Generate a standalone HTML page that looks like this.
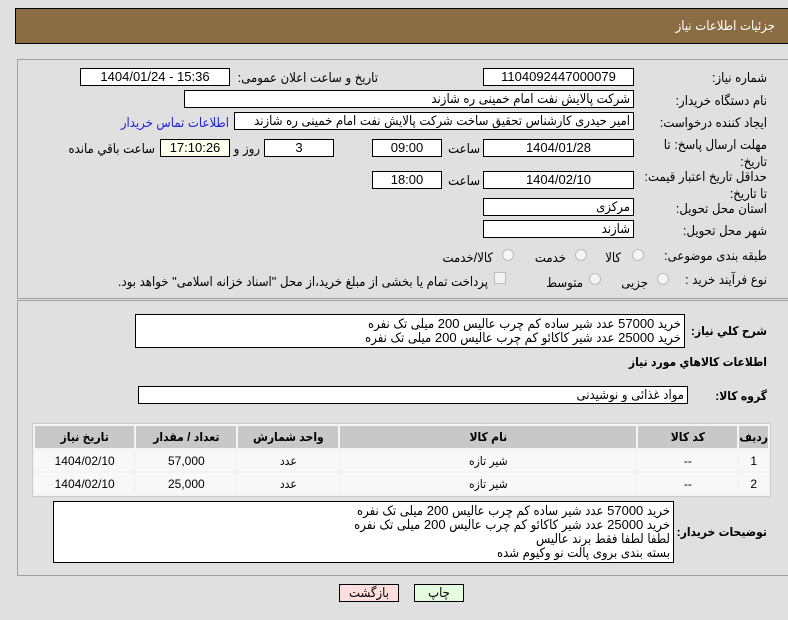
<!DOCTYPE html>
<html><head><meta charset="utf-8"><style>
*{box-sizing:border-box;margin:0;padding:0}
body{width:788px;height:620px;background:#e0e0e0;font-family:"Liberation Sans","DejaVu Sans Condensed","DejaVu Sans",sans-serif;font-size:12px;color:#000;position:relative;overflow:hidden}
.a{position:absolute}
.hd{left:15px;top:8px;width:773px;height:36px;background:#8b6d43;border:1px solid #000;border-right:none}
.hd span{position:absolute;right:13px;top:9px;color:#fff;font-size:13px}
.pn{border:1px solid #a0a0a0;border-right:none}
.bx{position:absolute;background:#fff;border:1px solid #000;height:18px;line-height:16px;text-align:center;font-size:13px;white-space:nowrap;overflow:hidden}
.r{text-align:right;padding-right:3px;direction:rtl}
.l{position:absolute;direction:rtl;text-align:right;white-space:nowrap;font-size:13px}
.b{font-weight:bold;font-size:12px}
.rad{position:absolute;width:12px;height:12px;border-radius:50%;border:1px solid #bbb;background:#f4f4f4}
table{border-collapse:separate;border-spacing:2px;background:#f4f4f4;border:1px solid #ccc}
td,th{text-align:center;font-size:12px;height:21px}
th{background:#c8c8c8;height:22px;font-weight:bold}
td{background:#f8f8f8}
.ta{position:absolute;background:#fff;border:1px solid #000;direction:rtl;text-align:right;font-size:13px;line-height:14px;padding:2px 3px;white-space:nowrap;overflow:hidden}
.btn{position:absolute;height:18px;border:1px solid #000;text-align:center;line-height:16px;font-size:13px}
</style></head><body>
<div class="a hd"><span>جزئیات اطلاعات نیاز</span></div>
<div class="a pn" style="left:17px;top:59px;width:771px;height:240px"></div>
<div class="a pn" style="left:17px;top:300px;width:771px;height:276px"></div>

<div class="l" style="right:21px;top:70px">شماره نیاز:</div>
<div class="bx" style="left:483px;top:68px;width:151px">1104092447000079</div>
<div class="l" style="right:410px;top:70px">تاریخ و ساعت اعلان عمومی:</div>
<div class="bx" style="left:80px;top:68px;width:150px">1404/01/24 - 15:36</div>

<div class="l" style="right:21px;top:93px">نام دستگاه خریدار:</div>
<div class="bx r" style="left:184px;top:90px;width:450px">شرکت پالایش نفت امام خمینی  ره  شازند</div>

<div class="l" style="right:21px;top:115px">ایجاد کننده درخواست:</div>
<div class="bx r" style="left:234px;top:112px;width:400px">امیر  حیدری کارشناس تحقیق ساخت شرکت پالایش نفت امام خمینی  ره  شازند</div>
<div class="l" style="right:559px;top:115px;color:#2222dd">اطلاعات تماس خریدار</div>

<div class="l" style="right:21px;top:136px;line-height:17px">مهلت ارسال پاسخ: تا<br>تاریخ:</div>
<div class="bx" style="left:483px;top:139px;width:151px">1404/01/28</div>
<div class="l" style="right:308px;top:141px">ساعت</div>
<div class="bx" style="left:372px;top:139px;width:70px">09:00</div>
<div class="bx" style="left:264px;top:139px;width:70px">3</div>
<div class="l" style="right:528px;top:141px">روز و</div>
<div class="bx" style="left:160px;top:139px;width:70px;background:#ffffee">17:10:26</div>
<div class="l" style="right:633px;top:141px">ساعت باقي مانده</div>

<div class="l" style="right:21px;top:168px;line-height:17px">حداقل تاریخ اعتبار قیمت:<br>تا تاریخ:</div>
<div class="bx" style="left:483px;top:171px;width:151px">1404/02/10</div>
<div class="l" style="right:308px;top:173px">ساعت</div>
<div class="bx" style="left:372px;top:171px;width:70px">18:00</div>

<div class="l" style="right:21px;top:201px">استان محل تحویل:</div>
<div class="bx r" style="left:483px;top:198px;width:151px">مرکزی</div>
<div class="l" style="right:21px;top:223px">شهر محل تحویل:</div>
<div class="bx r" style="left:483px;top:220px;width:151px">شازند</div>

<div class="l" style="right:21px;top:248px">طبقه بندی موضوعی:</div>
<div class="rad" style="left:632px;top:249px"></div><div class="l" style="right:167px;top:250px">کالا</div>
<div class="rad" style="left:575px;top:249px"></div><div class="l" style="right:222px;top:250px">خدمت</div>
<div class="rad" style="left:502px;top:249px"></div><div class="l" style="right:295px;top:250px">کالا/خدمت</div>

<div class="l" style="right:21px;top:272px">نوع فرآیند خرید :</div>
<div class="rad" style="left:657px;top:273px"></div><div class="l" style="right:140px;top:275px">جزیی</div>
<div class="rad" style="left:589px;top:273px"></div><div class="l" style="right:205px;top:275px">متوسط</div>
<div class="a" style="left:494px;top:272px;width:12px;height:12px;border:1px solid #bbb;background:#f4f4f4"></div>
<div class="l" style="right:300px;top:274px">پرداخت تمام یا بخشی از مبلغ خرید،از محل "اسناد خزانه اسلامی" خواهد بود.</div>

<div class="l b" style="right:21px;top:324px">شرح كلي نياز:</div>
<div class="ta" style="left:135px;top:314px;width:550px;height:34px">خرید 57000 عدد شیر ساده کم چرب عالیس 200 میلی تک نفره<br>خرید 25000 عدد شیر کاکائو کم چرب عالیس 200 میلی تک نفره</div>
<div class="l b" style="right:21px;top:355px">اطلاعات كالاهاي مورد نياز</div>
<div class="l b" style="right:21px;top:389px">گروه کالا:</div>
<div class="bx r" style="left:138px;top:386px;width:550px">مواد غذائی و نوشیدنی</div>

<table class="a" style="left:32px;top:423px;width:739px;direction:rtl">
<tr><th style="width:28px">رديف</th><th style="width:99px">کد کالا</th><th style="width:296px">نام کالا</th><th style="width:100px">واحد شمارش</th><th style="width:100px">تعداد / مقدار</th><th>تاریخ نیاز</th></tr>
<tr><td>1</td><td>--</td><td>شیر تازه</td><td>عدد</td><td>57,000</td><td>1404/02/10</td></tr>
<tr><td>2</td><td>--</td><td>شیر تازه</td><td>عدد</td><td>25,000</td><td>1404/02/10</td></tr>
</table>

<div class="l b" style="right:21px;top:525px">توضیحات خریدار:</div>
<div class="ta" style="left:53px;top:501px;width:621px;height:62px">خرید 57000 عدد شیر ساده کم چرب عالیس 200 میلی تک نفره<br>خرید 25000 عدد شیر کاکائو کم چرب عالیس 200 میلی تک نفره<br>لطفا لطفا فقط برند عالیس<br>بسته بندی بروی پالت نو وکیوم شده</div>

<div class="btn" style="left:339px;top:584px;width:60px;background:#fddede">بازگشت</div>
<div class="btn" style="left:414px;top:584px;width:50px;background:#e4fbe0">چاپ</div>
</body></html>
